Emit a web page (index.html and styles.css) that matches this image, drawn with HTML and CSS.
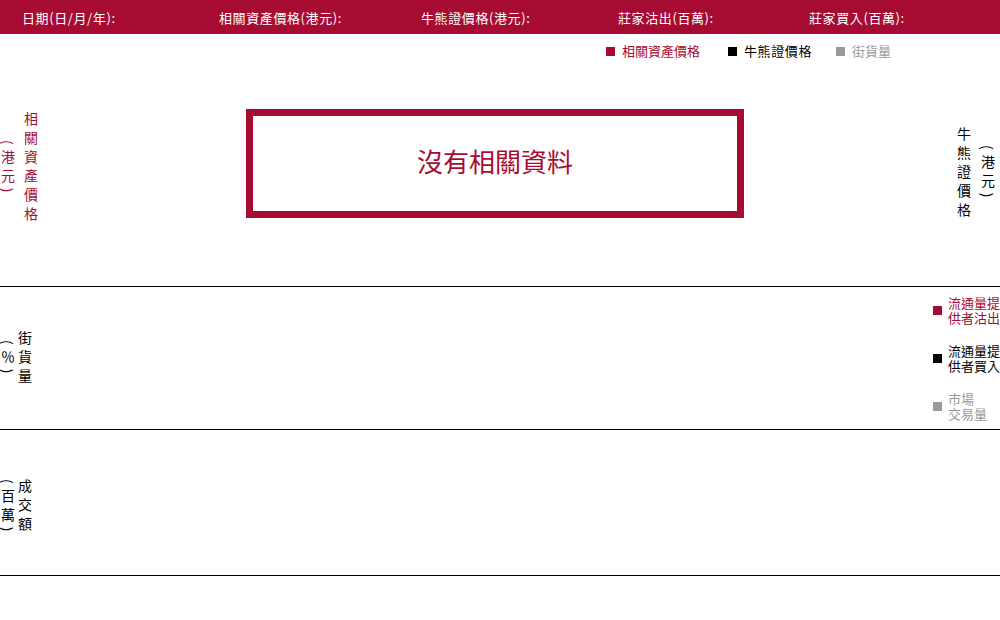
FILE: index.html
```html
<!DOCTYPE html>
<html lang="zh-Hant">
<head>
  <meta charset="UTF-8" />
  <meta name="viewport" content="width=device-width, initial-scale=1" />
  <title>牛熊證走勢</title>
  <link rel="stylesheet" href="styles.css">
</head>
<body>

  <header class="info-bar">
    <span class="info info-date">日期(日/月/年):</span>
    <span class="info info-asset">相關資產價格(港元):</span>
    <span class="info info-cbbc">牛熊證價格(港元):</span>
    <span class="info info-sell">莊家沽出(百萬):</span>
    <span class="info info-buy">莊家買入(百萬):</span>
  </header>

  <section class="panel panel-price">
    <div class="legend">
      <span class="legend-item red"><i class="dot"></i>相關資產價格</span>
      <span class="legend-item black"><i class="dot"></i>牛熊證價格</span>
      <span class="legend-item grey"><i class="dot"></i>街貨量</span>
    </div>
    <div class="panel-body">
      <div class="ylabel ylabel-asset red">
        <span class="vtext">(港元)</span>
        <span class="vtext">相關資產價格</span>
      </div>
      <div class="plot">
        <div class="no-data">沒有相關資料</div>
      </div>
      <div class="ylabel ylabel-cbbc">
        <span class="vtext">牛熊證價格</span>
        <span class="vtext">(港元)</span>
      </div>
    </div>
  </section>

  <section class="panel panel-os">
    <div class="ylabel ylabel-small">
      <span class="vtext">(％)</span>
      <span class="vtext">街貨量</span>
    </div>
    <div class="plot"></div>
    <div class="side-legend">
      <div class="side-item red"><i class="dot"></i><span>流通量提<br>供者沽出</span></div>
      <div class="side-item black"><i class="dot"></i><span>流通量提<br>供者買入</span></div>
      <div class="side-item grey"><i class="dot"></i><span>市場<br>交易量</span></div>
    </div>
  </section>

  <section class="panel panel-turnover">
    <div class="ylabel ylabel-small">
      <span class="vtext">(百萬)</span>
      <span class="vtext">成交額</span>
    </div>
    <div class="plot"></div>
  </section>

</body>
</html>
```

FILE: styles.css
```css
body {
  margin: 0;
  font-family: "Noto Sans CJK TC", "Noto Sans", sans-serif;
  color: #000;
  background: #fff;
  width: 1000px;
  overflow: hidden;
}
.red { color: #a60c32; }
.black { color: #000; }
.grey { color: #999; }

.info-bar {
  background: #a60c32;
  color: #fff;
  height: 34px;
  display: flex;
  align-items: center;
  padding-left: 22px;
  font-size: 13px;
  letter-spacing: 0.6px;
}
.info-date { width: 197px; }
.info-asset { width: 202px; }
.info-cbbc { width: 197px; }
.info-sell { width: 191px; }

.panel {
  border-bottom: 1px solid #000;
  display: flex;
}
.panel-price {
  height: 252px;
  flex-direction: column;
}
.panel-os { height: 142px; align-items: center; }
.panel-turnover { height: 145px; align-items: center; }

.legend {
  display: flex;
  padding: 9px 0 0 606px;
  font-size: 13px;
  line-height: 16px;
  height: 16px;
}
.legend-item {
  display: flex;
  align-items: center;
  margin-right: 28px;
}
.legend-item .dot {
  width: 9px;
  height: 9px;
  margin-right: 7px;
}
.legend-item.black { letter-spacing: 0.6px; margin-right: 24px; }
.dot { display: block; flex: none; background: currentColor; }

.panel-body {
  flex: 1;
  display: flex;
}

.ylabel {
  display: flex;
  align-items: center;
  flex: none;
}
.vtext {
  writing-mode: vertical-rl;
  font-size: 14px;
  line-height: 15px;
  letter-spacing: 5px;
}
.ylabel-asset {
  width: 40px;
  gap: 8px;
  padding-top: 24px;
  align-self: flex-start;
  height: 172px;
}
.ylabel-cbbc {
  width: 50px;
  gap: 9px;
  padding-left: 6px;
  margin-top: 22px;
  box-sizing: border-box;
  align-self: flex-start;
  height: 186px;
}
.ylabel-small {
  width: 40px;
  gap: 2px;
}
.panel-os .ylabel-small { padding-top: 3px; }
.panel-turnover .ylabel-small { padding-top: 10px; }

.plot {
  flex: 1;
  align-self: stretch;
}
.panel-body .plot {
  padding-top: 50px;
  display: flex;
  justify-content: center;
  align-items: flex-start;
}
.no-data {
  box-sizing: border-box;
  width: 498px;
  height: 109px;
  padding-bottom: 6px;
  border: 7px solid #a60c32;
  color: #a60c32;
  font-size: 26px;
  display: flex;
  align-items: center;
  justify-content: center;
}

.side-legend {
  width: 67px;
  display: flex;
  flex-direction: column;
  gap: 18px;
  font-size: 13px;
  line-height: 15px;
  white-space: nowrap;
}
.side-item {
  display: flex;
  align-items: center;
}
.side-item .dot {
  width: 9px;
  height: 9px;
  margin-right: 6px;
}
```
